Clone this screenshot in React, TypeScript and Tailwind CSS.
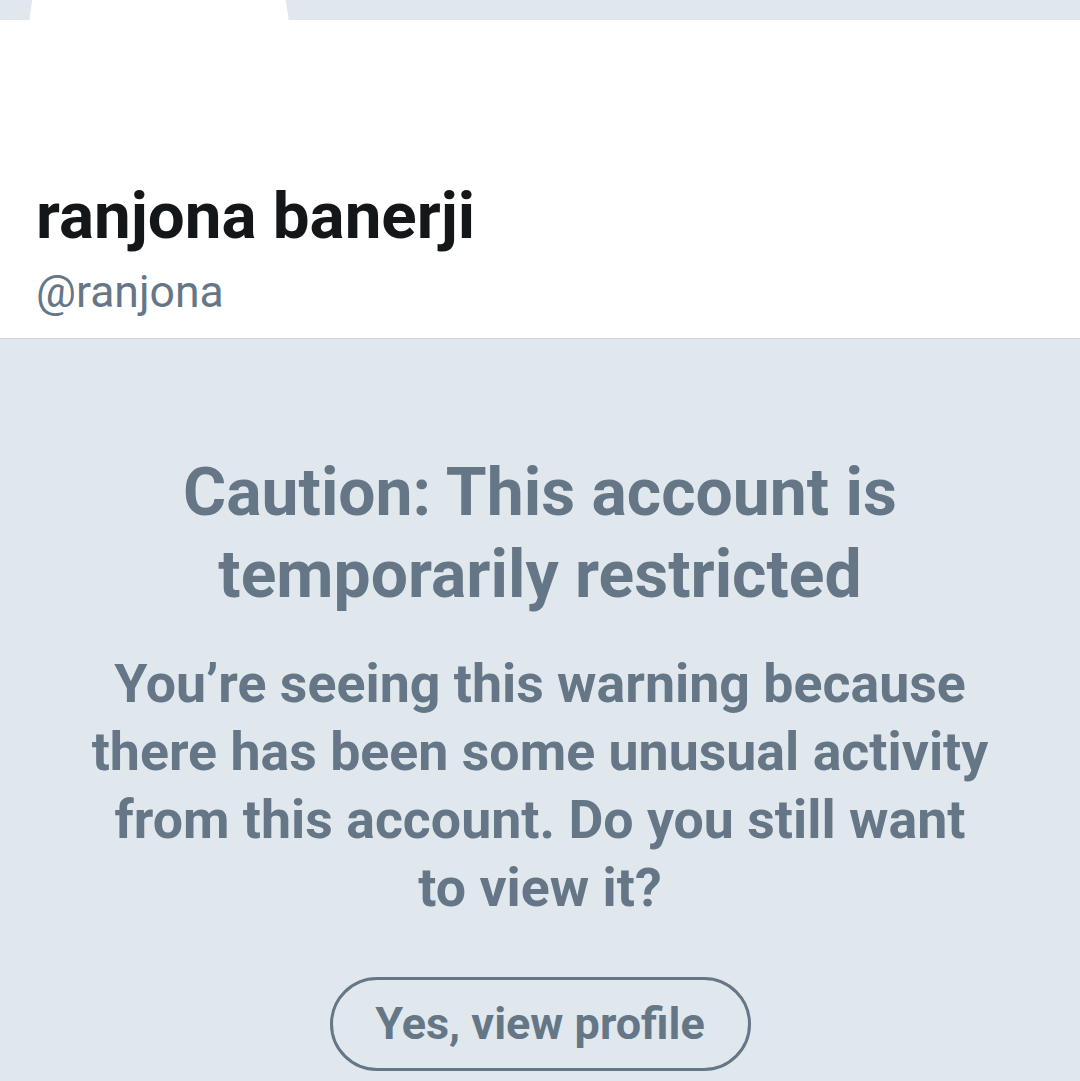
export default function App() {
  return (
    <div
      className="relative flex h-[1081px] w-full flex-col overflow-hidden bg-[#e1e8ed]"
      style={{ fontFamily: "Roboto, 'Noto Sans', sans-serif" }}
    >
      {/* header strip + avatar */}
      <div className="relative h-[20px] shrink-0 bg-[#e1e8ed]">
        <div className="absolute left-[29px] top-[-100px] z-10 h-[260px] w-[260px] rounded-full bg-white" />
      </div>

      <div className="flex h-[319px] shrink-0 flex-col border-b border-[#ccd6dd] bg-white px-[36px] pt-[158px]">
        <h1 className="text-[65.5px] font-bold leading-[76px] text-[#14171a]">
          ranjona banerji
        </h1>
        <p className="mt-[12px] text-[44.5px] leading-[52px] text-[#657786]">
          @ranjona
        </p>
      </div>

      <div className="flex flex-col items-center pt-[113px] text-center text-[#657786]">
        <h2 className="text-[66px] font-bold leading-[82px]">
          Caution: This account is
          <br />
          temporarily restricted
        </h2>
        <p className="mt-[34px] text-[53.7px] font-bold leading-[68px]">
          You’re seeing this warning because
          <br />
          there has been some unusual activity
          <br />
          from this account. Do you still want
          <br />
          to view it?
        </p>
        <button className="mt-[55px] flex h-[94px] w-[421px] items-center justify-center rounded-full border-[3px] border-[#657786] text-[45px] font-bold text-[#657786]">
          Yes, view profile
        </button>
      </div>
    </div>
  );
}
